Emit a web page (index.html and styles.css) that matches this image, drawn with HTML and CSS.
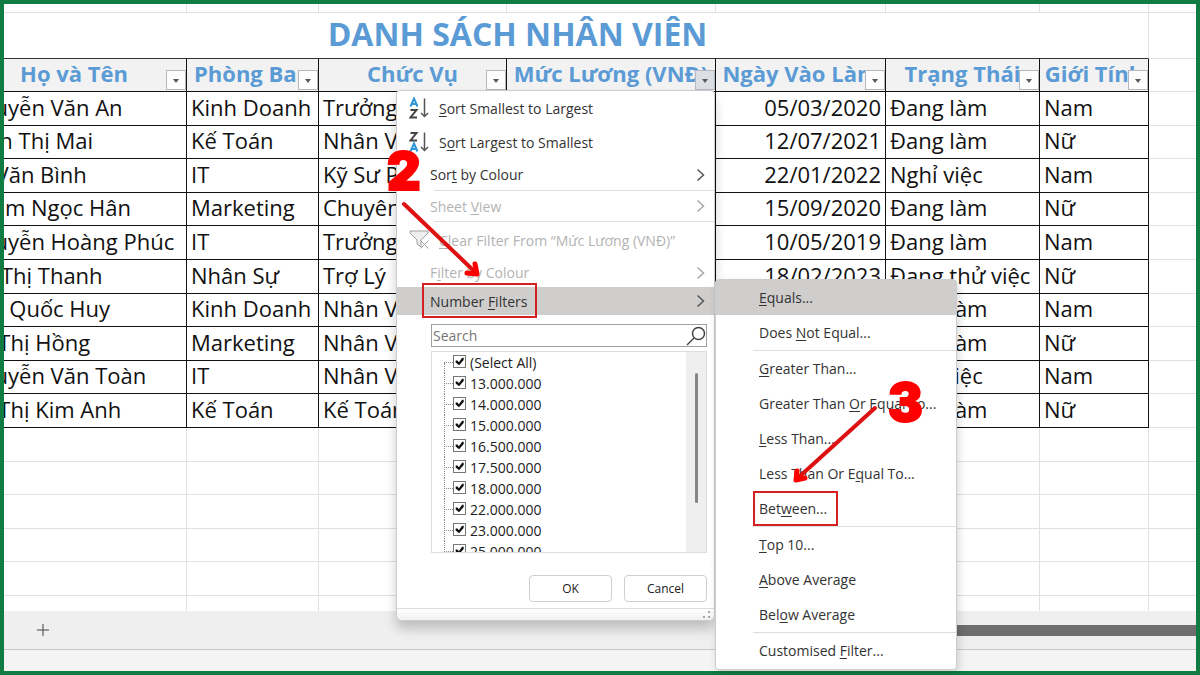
FILE: index.html
```html
<!DOCTYPE html>
<html lang="vi">
<head>
    <meta charset="UTF-8">
    <meta name="viewport" content="width=device-width, initial-scale=1.0">
    <title>Danh sách nhân viên</title>
    <link rel="stylesheet" href="styles.css">
</head>
<body>
    <div class="window">
        <div class="sheet">
            <table class="grid">
                <colgroup>
                    <col class="col-name">
                    <col class="col-dept">
                    <col class="col-role">
                    <col class="col-salary">
                    <col class="col-date">
                    <col class="col-status">
                    <col class="col-gender">
                    <col>
                </colgroup>
                <thead>
                    <tr class="top-row"><td></td><td></td><td></td><td></td><td></td><td></td><td></td><td></td></tr>
                    <tr class="title-row"><td colspan="7" class="title">DANH SÁCH NHÂN VIÊN</td><td></td></tr>
                    <tr class="head-row">
                        <th>Họ và Tên<button class="filter-btn" aria-label="Lọc"></button></th>
                        <th>Phòng Ban<button class="filter-btn" aria-label="Lọc"></button></th>
                        <th>Chức Vụ<button class="filter-btn" aria-label="Lọc"></button></th>
                        <th>Mức Lương (VNĐ)<button class="filter-btn open" aria-label="Lọc"></button></th>
                        <th>Ngày Vào Làm<button class="filter-btn" aria-label="Lọc"></button></th>
                        <th>Trạng Thái<button class="filter-btn" aria-label="Lọc"></button></th>
                        <th>Giới Tính<button class="filter-btn" aria-label="Lọc"></button></th>
                        <td></td>
                    </tr>
                </thead>
                <tbody class="data">
                    <tr><td>Nguyễn Văn An</td><td>Kinh Doanh</td><td>Trưởng Phòng</td><td></td><td class="date">05/03/2020</td><td>Đang làm</td><td>Nam</td><td></td></tr>
                    <tr><td>Trần Thị Mai</td><td>Kế Toán</td><td>Nhân Viên</td><td></td><td class="date">12/07/2021</td><td>Đang làm</td><td>Nữ</td><td></td></tr>
                    <tr><td>Lê Văn Bình</td><td>IT</td><td>Kỹ Sư Phần Mềm</td><td></td><td class="date">22/01/2022</td><td>Nghỉ việc</td><td>Nam</td><td></td></tr>
                    <tr><td>Phạm Ngọc Hân</td><td>Marketing</td><td>Chuyên Viên</td><td></td><td class="date">15/09/2020</td><td>Đang làm</td><td>Nữ</td><td></td></tr>
                    <tr><td>Nguyễn Hoàng Phúc</td><td>IT</td><td>Trưởng Nhóm</td><td></td><td class="date">10/05/2019</td><td>Đang làm</td><td>Nam</td><td></td></tr>
                    <tr><td>Đỗ Thị Thanh</td><td>Nhân Sự</td><td>Trợ Lý</td><td></td><td class="date">18/02/2023</td><td>Đang thử việc</td><td>Nữ</td><td></td></tr>
                    <tr><td>Mai Quốc Huy</td><td>Kinh Doanh</td><td>Nhân Viên</td><td></td><td class="date"></td><td>Đang làm</td><td>Nam</td><td></td></tr>
                    <tr><td>Vũ Thị Hồng</td><td>Marketing</td><td>Nhân Viên</td><td></td><td class="date"></td><td>Đang làm</td><td>Nữ</td><td></td></tr>
                    <tr><td>Nguyễn Văn Toàn</td><td>IT</td><td>Nhân Viên</td><td></td><td class="date"></td><td>Nghỉ việc</td><td>Nam</td><td></td></tr>
                    <tr><td>Vũ Thị Kim Anh</td><td>Kế Toán</td><td>Kế Toán</td><td></td><td class="date"></td><td>Đang làm</td><td>Nữ</td><td></td></tr>
                </tbody>
                <tbody class="blank">
                    <tr><td></td><td></td><td></td><td></td><td></td><td></td><td></td><td></td></tr>
                    <tr><td></td><td></td><td></td><td></td><td></td><td></td><td></td><td></td></tr>
                    <tr><td></td><td></td><td></td><td></td><td></td><td></td><td></td><td></td></tr>
                    <tr><td></td><td></td><td></td><td></td><td></td><td></td><td></td><td></td></tr>
                    <tr><td></td><td></td><td></td><td></td><td></td><td></td><td></td><td></td></tr>
                    <tr><td></td><td></td><td></td><td></td><td></td><td></td><td></td><td></td></tr>
                </tbody>
            </table>
        </div>
        <div class="tab-bar">
            <button class="add-sheet" aria-label="New sheet">
                <svg width="12" height="12" viewBox="0 0 12 12"><path d="M6 0v12M0 6h12"/></svg>
            </button>
            <div class="h-scroll"></div>
        </div>
        <div class="status-bar"></div>
    </div>

    <div class="filter-menu">
        <button class="item with-icon">
            <svg class="icon" width="20" height="22" viewBox="0 0 20 22">
                <path class="blue" d="M1.500 9.500L5 1.500L8.500 9.500M2.700 7h4.600"/>
                <path class="dark" d="M1.500 13h6L1.500 20.500h6.500"/>
                <path class="arrow" d="M15.500 1.500v18M12 16l3.500 3.500L19 16"/>
            </svg>
            <span><u>S</u>ort Smallest to Largest</span>
        </button>
        <button class="item with-icon">
            <svg class="icon" width="20" height="22" viewBox="0 0 20 22">
                <path class="dark" d="M1.500 2h6L1.500 9.500h6.500"/>
                <path class="blue" d="M1.500 20.500L5 12.500L8.500 20.500M2.700 18h4.600"/>
                <path class="arrow" d="M15.500 1.500v18M12 16l3.500 3.500L19 16"/>
            </svg>
            <span>S<u>o</u>rt Largest to Smallest</span>
        </button>
        <button class="item colour">
            <span>Sor<u>t</u> by Colour</span>
            <svg class="chevron" width="9" height="14" viewBox="0 0 9 14"><path d="M1.500 1.500L7.500 7L1.500 12.500"/></svg>
        </button>
        <hr>
        <button class="item view" disabled>
            <span>Sheet <u>V</u>iew</span>
            <svg class="chevron" width="9" height="14" viewBox="0 0 9 14"><path d="M1.500 1.500L7.500 7L1.500 12.500"/></svg>
        </button>
        <hr>
        <button class="item clear with-icon" disabled>
            <svg class="icon" width="20" height="22" viewBox="0 0 20 22">
                <path class="funnel" d="M1 2h18v2l-7 7v7l-4-3v-4L1 4z"/>
                <path class="cross" d="M11.500 11.500l8 8M19.500 11.500l-8 8"/>
            </svg>
            <span><u>C</u>lear Filter From “Mức Lương (VNĐ)”</span>
        </button>
        <button class="item by-colour" disabled>
            <span>F<u>i</u>lter by Colour</span>
            <svg class="chevron" width="9" height="14" viewBox="0 0 9 14"><path d="M1.500 1.500L7.500 7L1.500 12.500"/></svg>
        </button>
        <button class="item numbers">
            <span>Number <u>F</u>ilters</span>
            <svg class="chevron" width="9" height="14" viewBox="0 0 9 14"><path d="M1.500 1.500L7.500 7L1.500 12.500"/></svg>
        </button>
        <div class="values">
            <div class="search">
                <input type="text" placeholder="Search" aria-label="Search">
                <svg width="20" height="20" viewBox="0 0 20 20"><circle cx="12.500" cy="7.500" r="6"/><path d="M8 12L1 19"/></svg>
            </div>
            <div class="list">
                <ul class="tree">
                    <li><label><input type="checkbox" checked><span>(Select All)</span></label></li>
                    <li><label><input type="checkbox" checked><span>13.000.000</span></label></li>
                    <li><label><input type="checkbox" checked><span>14.000.000</span></label></li>
                    <li><label><input type="checkbox" checked><span>15.000.000</span></label></li>
                    <li><label><input type="checkbox" checked><span>16.500.000</span></label></li>
                    <li><label><input type="checkbox" checked><span>17.500.000</span></label></li>
                    <li><label><input type="checkbox" checked><span>18.000.000</span></label></li>
                    <li><label><input type="checkbox" checked><span>22.000.000</span></label></li>
                    <li><label><input type="checkbox" checked><span>23.000.000</span></label></li>
                    <li><label><input type="checkbox" checked><span>25.000.000</span></label></li>
                </ul>
                <div class="track"><div class="thumb"></div></div>
            </div>
            <div class="actions">
                <button>OK</button>
                <button>Cancel</button>
            </div>
        </div>
        <div class="grip">
            <svg width="8" height="8" viewBox="0 0 8 8"><path d="M5 0h2v2h-2zM5 5h2v2h-2zM0 5h2v2h-2z"/></svg>
        </div>
    </div>

    <div class="sub-menu">
        <button class="sub active"><span><u>E</u>quals...</span></button>
        <button class="sub"><span>Does <u>N</u>ot Equal...</span></button>
        <hr>
        <button class="sub"><span><u>G</u>reater Than...</span></button>
        <button class="sub"><span>Greater Than <u>O</u>r Equal To...</span></button>
        <button class="sub"><span><u>L</u>ess Than...</span></button>
        <button class="sub"><span>Less Than Or E<u>q</u>ual To...</span></button>
        <button class="sub"><span>Bet<u>w</u>een...</span></button>
        <hr>
        <button class="sub"><span><u>T</u>op 10...</span></button>
        <button class="sub"><span><u>A</u>bove Average</span></button>
        <button class="sub"><span>Bel<u>o</u>w Average</span></button>
        <hr>
        <button class="sub"><span>Customised <u>F</u>ilter...</span></button>
    </div>

    <!-- step marks over the menus -->
    <svg class="marks" width="1200" height="675" viewBox="0 0 1200 675">
        <rect x="423" y="284" width="113" height="33"/>
        <rect x="754" y="492" width="83" height="33"/>
        <path class="line" d="M404 204L474 271"/>
        <path class="head" d="M477 274L467 273M477 274L475 264"/>
        <path class="line" d="M875 408L799 477"/>
        <path class="head" d="M796 480L797 471M796 480L805 478"/>
        <text x="387" y="190">2</text>
        <text x="888" y="421">3</text>
    </svg>
</body>
</html>
```
FILE: styles.css
```css
* {
    margin: 0;
    padding: 0;
    box-sizing: border-box;
}

body {
    position: relative;
    height: 100vh;
    overflow: hidden;
    font-family: "Open Sans", sans-serif;
    background-color: #ffffff;
}

button,
input {
    font-family: inherit;
    color: inherit;
    background: none;
    border: none;
}

.window {
    display: flex;
    flex-direction: column;
    height: 100vh;
    border: 4px solid #107c41;
}

/* Bảng tính */
.sheet {
    flex: 1;
    overflow: hidden;
}

.grid {
    width: calc(100% + 42px);
    margin-left: -42px;
    table-layout: fixed;
    border-collapse: separate;
    border-spacing: 0;
}

.col-name { width: 225px; }
.col-dept { width: 132px; }
.col-role { width: 188px; }
.col-salary { width: 209px; }
.col-date { width: 170px; }
.col-status { width: 154px; }
.col-gender { width: 109px; }

.grid td,
.grid th {
    height: 34px;
    padding-bottom: 4px;
    border-right: 1px solid #e1e1e1;
    border-bottom: 1px solid #e1e1e1;
    font-size: 22px;
    line-height: 28px;
    white-space: nowrap;
    overflow: hidden;
}

.grid td:last-child {
    border-right: none;
}

.grid .top-row td {
    height: 9px;
}

.grid .title-row td {
    height: 46px;
}

.grid .title {
    padding-right: 75px;
    border-bottom-color: #333333;
    text-align: center;
    font-size: 32px;
    font-weight: bold;
    line-height: 40px;
    color: #5b9bd5;
}

.grid th {
    position: relative;
    border-color: #111111;
    background-color: #f2f2f2;
    color: #5b9bd5;
    font-weight: bold;
}

.data td {
    padding-left: 4px;
    color: #111111;
}

.data td:not(:last-child) {
    border-color: #111111;
}

.grid .head-row td,
.grid .head-row th,
.data tr:nth-child(5n+2) td,
.data tr:nth-child(5n+4) td,
.blank tr:nth-child(5n+2) td,
.blank tr:nth-child(5n+4) td {
    height: 33px;
}

.grid .date {
    padding-right: 4px;
    text-align: right;
}

.filter-btn {
    position: absolute;
    right: 0;
    bottom: 1px;
    width: 20px;
    height: 20px;
    border: 1px solid #b4b8c0;
    background-color: #fdfdfd;
}

.filter-btn::after {
    content: "";
    position: absolute;
    left: 6px;
    top: 8px;
    border: 3px solid transparent;
    border-top: 4px solid #5a5a5a;
    border-bottom: none;
}

.filter-btn.open {
    background-color: #dcdfe6;
}

/* Thanh dưới */
.tab-bar {
    display: flex;
    align-items: center;
    height: 39px;
    padding-left: 33px;
    background-color: #efefef;
    border-bottom: 1px solid #c8c8c8;
}

.add-sheet {
    width: 12px;
    height: 12px;
    line-height: 0;
}

.add-sheet path {
    stroke: #444444;
    stroke-width: 1;
}

.h-scroll {
    width: 30%;
    height: 11px;
    margin-left: auto;
    background-color: #6e6e6e;
}

.status-bar {
    height: 21px;
    background-color: #f4f4f4;
}

/* Menu lọc */
.filter-menu {
    position: absolute;
    left: 396px;
    top: 90px;
    width: 319px;
    border: 1px solid #cccccc;
    border-radius: 4px 4px 6px 6px;
    background-color: #ffffff;
    box-shadow: 0 8px 12px rgba(0, 0, 0, 0.2);
    font-size: 14px;
    color: #333333;
}

.filter-menu hr,
.sub-menu hr {
    height: 1px;
    margin-left: 37px;
    border: none;
    background-color: #dddddd;
}

.item {
    display: flex;
    align-items: center;
    justify-content: space-between;
    width: 100%;
    height: 34px;
    padding: 0 9px 0 33px;
    font-size: 14px;
    text-align: left;
}

.item u,
.sub u {
    text-underline-offset: 2px;
}

.with-icon {
    justify-content: flex-start;
    gap: 10px;
    padding-left: 12px;
}

.item.colour { height: 31px; }
.item.view { height: 30px; }
.item.clear { height: 36px; }
.item.by-colour { height: 29px; }

.item.numbers {
    height: 28px;
    background-color: #d0cecd;
}

.item:disabled {
    color: #b3b3b3;
}

.icon path,
.chevron path {
    fill: none;
    stroke: #555555;
    stroke-width: 1.500;
}

.icon .blue {
    stroke: #2f96d6;
    stroke-width: 2;
}

.icon .dark {
    stroke: #444444;
    stroke-width: 2;
}

.icon .funnel {
    fill: #eeeeee;
    stroke: #a0a0a0;
    stroke-width: 1;
}

.icon .cross {
    stroke: #a0a0a0;
    stroke-width: 1;
}

.item:disabled .chevron path {
    stroke: #a8a8a8;
}

.values {
    padding: 9px 7px 6px 34px;
}

.search {
    display: flex;
    align-items: center;
    height: 23px;
    border: 1px solid #a0a0a0;
}

.search input {
    flex: 1;
    min-width: 0;
    padding-left: 1px;
    font-size: 14px;
    outline: none;
}

.search input::placeholder {
    color: #767676;
}

.search svg {
    fill: none;
    stroke: #444444;
    stroke-width: 1.500;
}

.list {
    display: flex;
    height: 202px;
    margin-top: 4px;
    border: 1px solid #dddddd;
    overflow: hidden;
}

.tree {
    flex: 1;
    padding-left: 12px;
    list-style: none;
}

.tree li {
    position: relative;
    height: 21px;
}

.tree li::before {
    content: "";
    position: absolute;
    top: 0;
    bottom: 0;
    left: 0;
    border-left: 1px dotted #888888;
}

.tree li:first-child::before {
    top: 11px;
}

.tree label {
    display: flex;
    align-items: center;
    height: 21px;
    line-height: 21px;
    color: #222222;
}

.tree label::before {
    content: "";
    width: 9px;
    border-top: 1px dotted #888888;
}

.tree input {
    appearance: none;
    width: 13px;
    height: 13px;
    margin: 0 4px 2px 0;
    border: 1px solid #777777;
}

.tree input:checked::before {
    content: "";
    display: block;
    width: 11px;
    height: 11px;
    background-color: #111111;
    clip-path: polygon(15% 42%, 32% 42%, 44% 56%, 74% 16%, 88% 16%, 88% 36%, 46% 84%, 15% 60%);
}

.track {
    display: flex;
    justify-content: center;
    width: 20px;
    padding-top: 21px;
    background-color: #efefef;
}

.thumb {
    width: 3px;
    height: 130px;
    border-radius: 2px;
    background-color: #858585;
}

.actions {
    display: flex;
    justify-content: flex-end;
    gap: 12px;
    margin-top: 22px;
}

.actions button {
    width: 83px;
    height: 27px;
    border: 1px solid #cfcfcf;
    border-radius: 4px;
    font-size: 12px;
    color: #222222;
}

.grip {
    display: flex;
    justify-content: flex-end;
    height: 12px;
    padding: 2px 3px;
    border-top: 1px solid #dddddd;
    border-radius: 0 0 6px 6px;
    background: linear-gradient(#ffffff, #f0f1f2);
}

.grip path {
    fill: #a5a5a5;
}

.sub-menu {
    position: absolute;
    left: 715px;
    top: 279px;
    width: 242px;
    padding-bottom: 1px;
    border: 1px solid #cccccc;
    border-radius: 4px;
    background-color: #ffffff;
    box-shadow: 2px 4px 8px rgba(0, 0, 0, 0.15);
    color: #333333;
}

.sub {
    display: block;
    width: 100%;
    height: 35px;
    padding-left: 43px;
    font-size: 14px;
    line-height: 20px;
    text-align: left;
}

.sub.active {
    background-color: #d0cecd;
}

/* Đánh dấu các bước */
.marks {
    position: absolute;
    left: 0;
    top: 0;
    pointer-events: none;
}

.marks rect {
    fill: none;
    stroke: #d42020;
    stroke-width: 2;
}

.marks path {
    fill: none;
    stroke-linecap: round;
}

.marks .line {
    stroke: #dd1111;
    stroke-width: 4;
}

.marks .head {
    stroke: #ff0000;
    stroke-width: 5;
}

.marks text {
    fill: #ff0000;
    stroke: #ff0000;
    stroke-width: 2;
    font-family: Inter, sans-serif;
    font-size: 52px;
    font-weight: 900;
}
```
